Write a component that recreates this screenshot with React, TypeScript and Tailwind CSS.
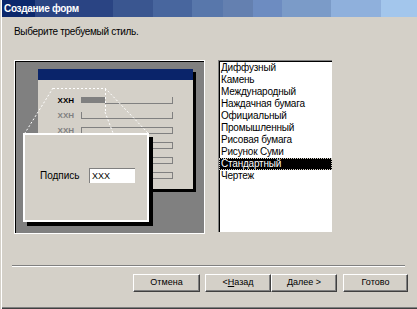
import React from 'react';

const styles = [
  'Диффузный',
  'Камень',
  'Международный',
  'Наждачная бумага',
  'Официальный',
  'Промышленный',
  'Рисовая бумага',
  'Рисунок Суми',
  'Стандартный',
  'Чертеж',
];

const selected = 'Стандартный';

const Field: React.FC<{ kind: 'filled' | 'open' | 'box' }> = ({ kind }) => {
  if (kind === 'filled') {
    return (
      <div className="flex h-[7px] w-[92px]">
        <div className="h-[6px] w-[24px] bg-[#808080]" />
        <div className="h-[7px] flex-1 border-b border-r border-[#808080]" />
      </div>
    );
  }
  if (kind === 'open') {
    return <div className="h-[7px] w-[92px] border-b border-l border-r border-[#808080]" />;
  }
  return <div className="h-[7px] w-[92px] border border-[#808080]" />;
};

const rows: { label: string; color: string; kind: 'filled' | 'open' | 'box' }[] = [
  { label: 'XXH', color: 'text-black', kind: 'filled' },
  { label: 'XXH', color: 'text-[#808080]', kind: 'open' },
  { label: 'XXH', color: 'text-[#808080]', kind: 'box' },
  { label: '', color: '', kind: 'box' },
  { label: '', color: '', kind: 'box' },
  { label: '', color: '', kind: 'box' },
];

const Preview: React.FC = () => (
  <div className="h-[174px] w-[191px] border border-white">
    <div className="relative h-full w-full border-l border-t border-black bg-[#808080]">
      {/* mini form window */}
      <div className="ml-[22px] mt-[7px] flex h-[120px] w-[155px] flex-col bg-[#d4d0c8] shadow-[3px_3px_0_#000]">
        <div className="h-[11px] bg-[#0a246a]" />
        <div className="flex flex-col gap-[8px] pt-[17px]">
          {rows.map((row, i) => (
            <div key={i} className="flex h-[7px] items-center">
              <div className={`w-[36px] text-right text-[8px] font-bold leading-[7px] ${row.color}`}>{row.label}</div>
              <div className="ml-[7px]">
                <Field kind={row.kind} />
              </div>
            </div>
          ))}
        </div>
      </div>

      <svg className="pointer-events-none absolute left-0 top-0" width="190" height="172">
        <g stroke="#ffffff" strokeWidth="1" strokeDasharray="2 2" fill="none">
          <line x1="37" y1="26.5" x2="89" y2="26.5" />
          <line x1="37" y1="26" x2="9" y2="71" />
          <line x1="89" y1="26" x2="132" y2="71" />
          <line x1="89.5" y1="27" x2="89.5" y2="50" />
          <line x1="89" y1="50" x2="97" y2="71" />
        </g>
      </svg>

      {/* magnified label */}
      <div className="absolute left-[7px] top-[71px] h-[89px] w-[126px] border-2 border-white bg-[#d4d0c8] shadow-[4px_4px_0_#000]">
        <div className="flex items-center pl-[15px] pt-[33px]">
          <div className="w-[49px] text-[10px] leading-[15px] text-black">Подпись</div>
          <div className="h-[15px] w-[46px] border-l border-t border-[#808080] bg-white pl-[2px] text-[9px] leading-[14px] text-black">
            XXX
          </div>
        </div>
      </div>
    </div>
  </div>
);

const StyleList: React.FC = () => (
  <div className="h-[172px] w-[114px] border-l border-t border-[#808080] bg-white pt-[1px] shadow-[inset_1px_1px_0_#000]">
    {styles.map((s) => (
      <div
        key={s}
        className={
          s === selected
            ? 'h-[12px] whitespace-nowrap bg-black pl-[2px] text-[10px] leading-[12px] tracking-[-0.2px] text-white outline-1 -outline-offset-1 outline-dotted outline-[#d4d0c8]'
            : 'h-[12px] whitespace-nowrap pl-[2px] text-[10px] leading-[12px] tracking-[-0.2px] text-black'
        }
      >
        {s}
      </div>
    ))}
  </div>
);

const btn =
  'flex h-[18px] items-center justify-center border border-white border-b-[#404040] border-r-[#404040] bg-[#d4d0c8] text-[9px] text-black shadow-[inset_-1px_-1px_0_#808080]';

export default function App() {
  return (
    <div className="relative flex h-[309px] w-[417px] flex-col overflow-hidden bg-[#d4d0c8] font-['Liberation_Sans',Arial,sans-serif] shadow-[inset_1px_0_0_#d4d0c8,inset_2px_0_0_#ffffff,inset_0_-1px_0_#404040,inset_0_-2px_0_#808080]">
      <div className="ml-[2px] flex h-[17px] items-center bg-[linear-gradient(to_right,#0c286c_0,#0c286c_33px,#2a4483_33px,#2a4483_111px,#3a5690_111px,#3a5690_151px,#48669e_151px,#48669e_190px,#5877ab_190px,#5877ab_221px,#6480b0_221px,#6480b0_251px,#6d8cc1_251px,#6d8cc1_280px,#7b9bc8_280px,#7b9bc8_329px,#8fb0dc_329px,#8fb0dc_379px,#a3c6ec_379px)] pl-[2px] text-[10px] font-bold tracking-[-0.3px] text-white">
        Создание форм
      </div>

      <div className="pl-[14px] pt-[8px] text-[10px] leading-[13px] tracking-[-0.3px] text-black">Выберите требуемый стиль.</div>

      <div className="mt-[22px] flex items-start gap-[13px] pl-[14px]">
        <Preview />
        <StyleList />
      </div>

      <div className="ml-[12px] mt-[31px] h-[2px] w-[393px] border-b border-t border-b-white border-t-[#808080]" />

      <div className="ml-[133px] mt-[7px] flex">
        <button className={`${btn} w-[67px]`}>Отмена</button>
        <button className={`${btn} ml-[5px] w-[66px]`}>
          &lt; <span className="underline">Н</span>азад
        </button>
        <button className={`${btn} w-[66px]`}>
          <span className="underline">Д</span>алее &gt;
        </button>
        <button className={`${btn} ml-[6px] w-[65px]`}>Готово</button>
      </div>
    </div>
  );
}
